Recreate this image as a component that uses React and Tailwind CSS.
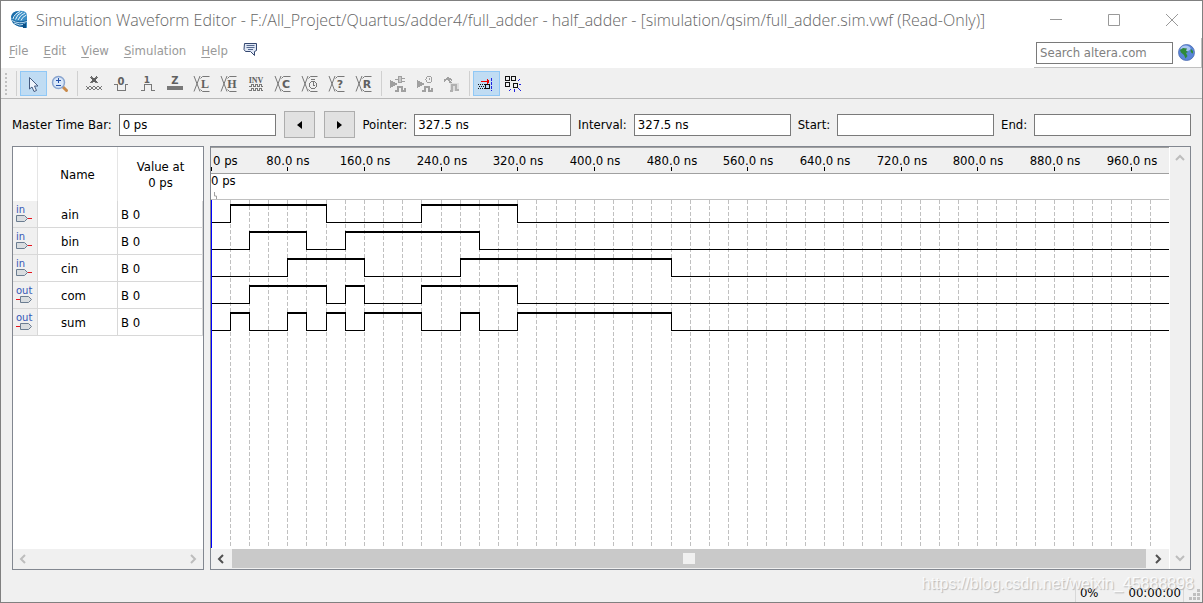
import React, { useState } from 'react';

const TICKS = Array.from({ length: 13 }, (_, i) => i * 80);
const GRID = Array.from({ length: 49 }, (_, i) => i + 1);
const PX_PER_NS = 0.9585;
const ROW_HEIGHT = 27;

// high: [start, end] pairs in 20 ns steps
const SIGNALS = [
  { name: 'ain', dir: 'in', value: 'B 0', high: [[1, 6], [11, 16]] },
  { name: 'bin', dir: 'in', value: 'B 0', high: [[2, 5], [7, 14]] },
  { name: 'cin', dir: 'in', value: 'B 0', high: [[4, 8], [13, 24]] },
  { name: 'com', dir: 'out', value: 'B 0', high: [[2, 6], [7, 8], [11, 16]] },
  { name: 'sum', dir: 'out', value: 'B 0', high: [[1, 2], [4, 5], [6, 7], [8, 11], [13, 14], [16, 24]] },
];

const MENUS = ['File', 'Edit', 'View', 'Simulation', 'Help'];

const stepX = (step) => Math.floor(step * 20 * PX_PER_NS);

function Logo() {
  return (
    <svg width="20" height="20" viewBox="0 0 20 20" className="shrink-0">
      <path d="M1 8 Q1 2 8 1 Q16 0 17 5 L17 18 L12 17 Q2 16 1 8Z" fill="#3b8fc6" />
      <path d="M1 7 Q2 1 9 1 Q5 3 4 10Z" fill="#1b6ca8" />
      <path d="M3 9 Q4 4 10 1.500 M5.500 9.500 Q7 4 12.500 2 M8 10 Q10 5 15 3 M11 10.500 Q12 7 16.500 5" stroke="#e6f3fb" strokeWidth="1" fill="none" />
      <path d="M1 9 Q8 13 17 10 L16 14 L13 17 Q4 17 1 9Z" fill="#14609c" />
      <path d="M2 10.500 Q9 14.500 17 11.500 M4 13 Q10 16.500 15 14" stroke="#b9dbf0" strokeWidth="1" fill="none" />
      <path d="M13 14h3v4h-3z" fill="#0b4f86" />
    </svg>
  );
}

function Globe() {
  return (
    <svg width="17" height="17" viewBox="0 0 17 17">
      <circle cx="8.500" cy="8.500" r="8" fill="#5a86d8" stroke="#4a69b0" strokeWidth="0.8" />
      <ellipse cx="7.500" cy="4.500" rx="5" ry="3" fill="#a9c5f2" />
      <path d="M2 6 L5 4 L9 4.500 L8 6.500 L10 8 L8 9 L9.500 12 L7.500 14.500 L6 11 L3 8.500Z M13 5 L15 7 L15 9.500 L13.500 9 L12.500 7Z" fill="#2f8a3a" />
    </svg>
  );
}

function Feedback() {
  return (
    <svg width="15" height="13" viewBox="0 0 15 13">
      <path d="M1.500 .5h12v7l-2 1v4l-4-4h-5l-1.500-2z" fill="#dfe7f5" stroke="#34476f" />
      <path d="M3.500 2.500h8M3.500 4.500h8M5 6.500h5" stroke="#55698f" />
    </svg>
  );
}

function PinIcon({ dir }) {
  const out = dir === 'out';
  return (
    <span className="flex flex-col pl-[3px] pt-px font-['DejaVu_Sans'] text-[10px] leading-[8px] text-[#3557b7]">
      {dir}
      <svg width="17" height="9" viewBox="0 0 17 9">
        <path d={out ? 'M0 4.500h5' : 'M11 4.500h5'} stroke="#e8141c" shapeRendering="crispEdges" />
        <path d={out ? 'M4.500 1.500h8l3 3l-3 3h-8z' : 'M.5 1.500h8l3 3l-3 3h-8z'} fill="#d9dde0" stroke="#6b7d91" />
      </svg>
    </span>
  );
}

function Icon({ children, faded }) {
  return (
    <svg width="18" height="18" viewBox="0 0 18 18" fill="none" stroke={faded ? '#a0a0a0' : '#787878'} shapeRendering="crispEdges">
      {children}
    </svg>
  );
}

function Glyph({ x, y, size, sans, children }) {
  return (
    <text
      x={x}
      y={y}
      textAnchor="middle"
      fontSize={size}
      fill="#606060"
      stroke="none"
      fontWeight="bold"
      fontFamily={sans ? 'DejaVu Sans, sans-serif' : 'Liberation Serif, serif'}
    >
      {children}
    </text>
  );
}

function Cross({ letter, sans, children }) {
  return (
    <Icon>
      <path d="M1 1l6 15.500M7 1l-6 15.500M7.500 3.500l2-2h7M7.500 14.500l2 2h7" shapeRendering="auto" />
      {letter && <Glyph x={12} y={13} size={sans ? 11 : 12} sans={sans}>{letter}</Glyph>}
      {children}
    </Icon>
  );
}

const ICONS = {
  pointer: (
    <svg width="18" height="18" viewBox="0 0 18 18">
      <path d="M5.500 2.500v11.500l2.500-2l2 4.500l2.500-1l-2-4.500h3.500z" fill="#eef4fb" stroke="#445a80" />
    </svg>
  ),
  zoom: (
    <svg width="18" height="18" viewBox="0 0 18 18">
      <path d="M12 12l3.500 3.500" stroke="#c98a4a" strokeWidth="3" strokeLinecap="round" />
      <circle cx="7.500" cy="7.500" r="6" fill="#d9e7f9" stroke="#8aa5cf" strokeWidth="1.500" />
      <path d="M7.500 3v5M5 5.500h5M5 10.500h5" stroke="#2450a8" shapeRendering="crispEdges" />
    </svg>
  ),
  x: (
    <Icon>
      <path d="M6 2l6 6M12 2l-6 6" strokeWidth="2" stroke="#606060" />
      <path d="M5 2.500h3M10 2.500h3M5 7.500h3M10 7.500h3" />
      <path d="M1 11l4 4l4-4l4 4l4-4M1 15l4-4l4 4l4-4l4 4" />
    </Icon>
  ),
  zero: <Icon><Glyph x={9} y={10} size={10} sans>0</Glyph><path d="M2 9.500h3v6h8v-6h3" /></Icon>,
  one: <Icon><Glyph x={8} y={8} size={9} sans>1</Glyph><path d="M2 15.500h3v-6h7v6h4" /></Icon>,
  z: <Icon><Glyph x={9} y={9} size={10} sans>Z</Glyph><path d="M1 13h16" strokeWidth="4" /></Icon>,
  low: <Cross letter="L" />,
  high: <Cross letter="H" />,
  inv: (
    <Icon>
      <Glyph x={9} y={8} size={8}>INV</Glyph>
      <path d="M2 11.500h2v-2h2v2h2v-2h2v2h2v-2h2v2h2M2 15.500h2v-2h2v2h2v-2h2v2h2v-2h2v2h2" />
    </Icon>
  ),
  count: <Cross letter="C" sans />,
  clock: <Cross><circle cx="12" cy="10" r="3.500" /><path d="M12 10v-3M12 10h2M10 4.500h4" /></Cross>,
  arbitrary: <Cross letter="?" sans />,
  random: <Cross letter="R" sans />,
  functional: (
    <Icon faded>
      <path d="M1.500 5.500v7l6-3.500z" fill="#a0a0a0" />
      <path d="M6 4.500h3M9.500 1.500h3v6h-3zM13 3.500h3M13 6.500h3" fill="#c8c8c8" />
      <path d="M6 15.500h3v-4h4v4h3v-3" strokeWidth="2" />
    </Icon>
  ),
  timing: (
    <Icon faded>
      <path d="M1.500 5.500v7l6-3.500z" fill="#a0a0a0" />
      <circle cx="13" cy="4.500" r="3" />
      <path d="M13 2.500v2" />
      <path d="M6 15.500h3v-4h4v4h3v-3" strokeWidth="2" />
    </Icon>
  ),
  testbench: (
    <Icon faded>
      <path d="M1 6l4-3l4 2" strokeWidth="2" />
      <path d="M5 4l5 7" strokeWidth="2" />
      <path d="M7 8h9v8h-9z" fill="#dedede" stroke="none" />
      <path d="M7 15.500h2v-6h4v5h3" strokeWidth="2" stroke="#b0b0b0" />
    </Icon>
  ),
  snapGrid: (
    <svg width="18" height="18" viewBox="0 0 18 18" fill="none" shapeRendering="crispEdges">
      <path d="M4 6.500h8M10 4v5M11 5v3" stroke="#f00000" />
      <path d="M1 9.500h7M1 13.500h7M2 11.500h6" stroke="#111" strokeDasharray="1 1" />
      <path d="M8.500 9.500h4v4h-4z" stroke="#111" />
      <path d="M14.500 3v13" stroke="#2020e0" strokeDasharray="3 1" />
    </svg>
  ),
  snapEdge: (
    <svg width="18" height="18" viewBox="0 0 18 18" fill="none" shapeRendering="crispEdges">
      <path d="M1.500 1.500h4v4h-4zM7.500 1.500h4v4h-4zM1.500 7.500h4v4h-4zM9.500 8.500h4v4h-4z" stroke="#111" />
      <path d="M14 6l2-2M15 9.500h2M14 13l3 3M10.500 14v3M7 14l-2 2" stroke="#2020e0" />
    </svg>
  ),
};

const TOOLS = [
  ['pointer', 'zoom'],
  ['x', 'zero', 'one', 'z', 'low', 'high', 'inv', 'count', 'clock', 'arbitrary', 'random'],
  ['functional', 'timing', 'testbench'],
  ['snapGrid', 'snapEdge'],
];

function Chevron({ dir, dark }) {
  const paths = {
    left: 'M7 1L3 5l4 4',
    right: 'M3 1l4 4l-4 4',
    up: 'M1 7l4-4l4 4',
    down: 'M1 3l4 4l4-4',
  };
  return (
    <svg width="10" height="10" viewBox="0 0 10 10" fill="none" stroke={dark ? '#505050' : '#bdbdbd'} strokeWidth="2">
      <path d={paths[dir]} />
    </svg>
  );
}

function Field({ label, value }) {
  return (
    <label className="contents">
      <span className="whitespace-nowrap">{label}</span>
      <input
        readOnly
        value={value}
        className="h-[22px] w-0 min-w-0 flex-1 border border-[#7a7a7a] bg-white px-[3px] outline-none"
      />
    </label>
  );
}

function wavePath(high, top) {
  const lo = top + 22.5;
  const hi = top + 5;
  let low = `M0 ${lo}`;
  let tops = '';
  high.forEach(([a, b]) => {
    const xa = stepX(a) + 0.5;
    const xb = stepX(b) + 0.5;
    low += `H${xa}V${hi}M${xb} ${hi}V${lo}`;
    tops += `M${xa - 0.5} ${hi}H${xb + 0.5}`;
  });
  return { low: `${low}H4000`, tops };
}

function Waves() {
  return (
    <svg className="block min-h-0 w-full flex-1 bg-white" shapeRendering="crispEdges" fill="none">
      {GRID.map((g) => (
        <line key={g} x1={stepX(g) + 0.5} x2={stepX(g) + 0.5} y1="0" y2="100%" stroke="#c0c0c0" strokeDasharray="4 2" />
      ))}
      {SIGNALS.map((s, i) => {
        const { low, tops } = wavePath(s.high, i * ROW_HEIGHT);
        return (
          <g key={s.name} stroke="#000">
            <path d={low} />
            <path d={tops} strokeWidth="2" />
          </g>
        );
      })}
      <line x1="0.5" x2="0.5" y1="0" y2="100%" stroke="#0000ff" />
    </svg>
  );
}

export default function App() {
  const [tool, setTool] = useState('pointer');

  return (
    <div className="relative flex h-screen flex-col overflow-hidden border border-[#808080] bg-[#f0f0f0] font-['DejaVu_Sans_Condensed','DejaVu_Sans',sans-serif] text-[13px] text-black">
      {/* Title bar */}
      <header className="flex h-[37px] shrink-0 items-center justify-between bg-white pl-[9px] pr-[24px]">
        <div className="flex min-w-0 items-center gap-[6px]">
          <Logo />
          <h1 className="truncate font-['Open_Sans','Noto_Sans',sans-serif] text-[16px] font-light text-[#666666]">
            Simulation Waveform Editor - F:/All_Project/Quartus/adder4/full_adder - half_adder - [simulation/qsim/full_adder.sim.vwf (Read-Only)]
          </h1>
        </div>
        <div className="flex shrink-0 items-center gap-[46px]">
          <button aria-label="Minimize"><svg width="12" height="12" stroke="#999"><path d="M0 5.500h12" /></svg></button>
          <button aria-label="Maximize"><svg width="12" height="12" fill="none" stroke="#999"><path d="M.5 .5h11v11h-11z" /></svg></button>
          <button aria-label="Close"><svg width="12" height="12" stroke="#999"><path d="M0 0l12 12M12 0L0 12" /></svg></button>
        </div>
      </header>

      {/* Menu */}
      <div className="flex h-[31px] shrink-0 items-stretch justify-between border-b border-[#f0f0f0] bg-white">
        <nav className="flex items-center gap-[15px] pb-1 pl-2 text-[#999999]">
          {MENUS.map((m) => (
            <button key={m}>
              <span className="underline underline-offset-2">{m[0]}</span>
              {m.slice(1)}
            </button>
          ))}
          <button aria-label="Feedback" className="pb-1"><Feedback /></button>
        </nav>
        <form className="flex items-center gap-[5px] border-b border-r border-[#c0c0c0] pl-[2px] pr-[6px]">
          <input
            aria-label="Search altera.com"
            placeholder="Search altera.com"
            className="h-[22px] w-[137px] border border-[#7a7a7a] bg-white px-[3px] outline-none placeholder:text-[#808080]"
          />
          <button type="button" aria-label="Search"><Globe /></button>
        </form>
      </div>

      {/* Toolbar */}
      <div className="flex h-[30px] shrink-0 items-center border-b border-[#b8b8b8] pl-1">
        <div className="h-[22px] border-l-2 border-dotted border-[#c0c0c0]" />
        <div className="ml-[9px] flex items-center">
          {TOOLS.map((group, i) => (
            <div key={i} className="flex items-center border-l border-[#d0d0d0] px-[3px]">
              {group.map((id) => (
                <button
                  key={id}
                  aria-label={id}
                  onClick={() => setTool(id)}
                  className={`flex h-[25px] w-[27px] items-center justify-start border pl-[3px] ${tool === id || id === 'snapGrid' ? 'border-[#90c8f6] bg-[#c0dcf3]' : 'border-transparent'}`}
                >
                  {ICONS[id]}
                </button>
              ))}
            </div>
          ))}
        </div>
      </div>

      {/* Time bar */}
      <div className="flex h-[47px] shrink-0 items-center gap-[7px] px-[11px] pt-1">
        <Field label="Master Time Bar:" value="0 ps" />
        <div className="mx-px flex gap-[9px]">
          <button aria-label="Previous transition" className="flex h-[27px] w-[31px] items-center justify-center border border-[#adadad] bg-[#e1e1e1]">
            <svg width="5" height="8"><path d="M5 0v8L0 4z" /></svg>
          </button>
          <button aria-label="Next transition" className="flex h-[27px] w-[31px] items-center justify-center border border-[#adadad] bg-[#e1e1e1]">
            <svg width="5" height="8"><path d="M0 0v8l5-4z" /></svg>
          </button>
        </div>
        <Field label="Pointer:" value="327.5 ns" />
        <Field label="Interval:" value="327.5 ns" />
        <Field label="Start:" value="" />
        <Field label="End:" value="" />
      </div>

      <main className="flex min-h-0 flex-1 gap-[6px] px-[11px]">
        {/* Signal list */}
        <section className="flex w-[192px] shrink-0 flex-col border border-[#828790] bg-white">
          <table className="w-full table-fixed border-separate border-spacing-0">
            <thead>
              <tr className="h-[54px]">
                <th className="w-[25px] border-r border-[#e5e5e5]" />
                <th className="w-20 border-r border-[#e5e5e5] px-0 pb-0 pt-[2px] font-normal">Name</th>
                <th className="px-0 pb-0 pt-[2px] font-normal leading-4">Value at<br />0 ps</th>
              </tr>
            </thead>
            <tbody>
              {SIGNALS.map((s) => (
                <tr key={s.name} className="h-[27px]">
                  <td className="border-b border-r border-[#d8d8d8] bg-[#f0f0f0] p-0"><PinIcon dir={s.dir} /></td>
                  <td className="border-b border-r border-[#d8d8d8] pb-0 pl-[23px] pr-0 pt-[2px]">{s.name}</td>
                  <td className="border-b border-r border-[#d8d8d8] pb-0 pl-[3px] pr-0 pt-[2px]">{s.value}</td>
                </tr>
              ))}
            </tbody>
          </table>
          <div className="mt-auto flex h-5 items-center justify-between bg-[#f0f0f0] px-[5px] pb-px">
            <Chevron dir="left" />
            <Chevron dir="right" />
          </div>
        </section>

        {/* Waveforms */}
        <section className="flex min-w-0 flex-1 border border-[#828790]">
          <div className="flex min-w-0 flex-1 flex-col">
            <svg className="block h-[27px] w-full shrink-0 border-b border-t border-[#a0a0a0]">
              {TICKS.map((t) => {
                const x = Math.floor(t * PX_PER_NS);
                return (
                  <g key={t}>
                    <text x={t ? x + 1 : 2} y="17" textAnchor={t ? 'middle' : 'start'}>{t ? `${t}.0 ns` : '0 ps'}</text>
                    <path d={`M${x + 0.5} 19v4`} stroke="#000" />
                  </g>
                );
              })}
            </svg>
            <div className="flex h-[26px] shrink-0 flex-col justify-between border-b border-[#c0c0c0] bg-white leading-[14px]">
              0 ps
              <svg width="6" height="7" fill="#f0f0f0" stroke="#a0a0a0"><path d="M3.500 0v4h2v3" /></svg>
            </div>
            <Waves />
            <div className="flex h-[21px] shrink-0 items-center border-t border-white bg-[#f0f0f0] pb-px">
              <button aria-label="Scroll left" className="flex w-[21px] justify-center pr-px"><Chevron dir="left" dark /></button>
              <div className="flex h-[19px] flex-1 justify-center bg-[#c9c9c9]">
                <div className="my-1 w-3 bg-[#f0f0f0]" />
              </div>
              <button aria-label="Scroll right" className="flex w-[23px] justify-center"><Chevron dir="right" dark /></button>
            </div>
          </div>
          <div className="flex w-[21px] flex-col items-center justify-between border-l border-white py-[6px]">
            <button aria-label="Scroll up"><Chevron dir="up" /></button>
            <button aria-label="Scroll down"><Chevron dir="down" /></button>
          </div>
        </section>
      </main>

      {/* Status bar */}
      <footer className="flex h-8 shrink-0 items-end justify-end">
        <span className="border-l border-[#d8d8d8] pl-1 pr-[30px]">0%</span>
        <span className="border-r border-[#d8d8d8] pr-[2px]">00:00:00</span>
        <svg width="18" height="13" fill="#bfbfbf">
          <path d="M13 0h3v3h-3zM9 4h3v3h-3zM13 4h3v3h-3zM5 8h3v3h-3zM9 8h3v3h-3zM13 8h3v3h-3z" />
        </svg>
      </footer>
      <span className="pointer-events-none absolute bottom-[8px] right-[8px] font-['Liberation_Sans',sans-serif] text-[16px] leading-5 text-white/80 [text-shadow:1px_1px_1px_#b8b8b8]">
        https://blog.csdn.net/weixin_45888898
      </span>
    </div>
  );
}
